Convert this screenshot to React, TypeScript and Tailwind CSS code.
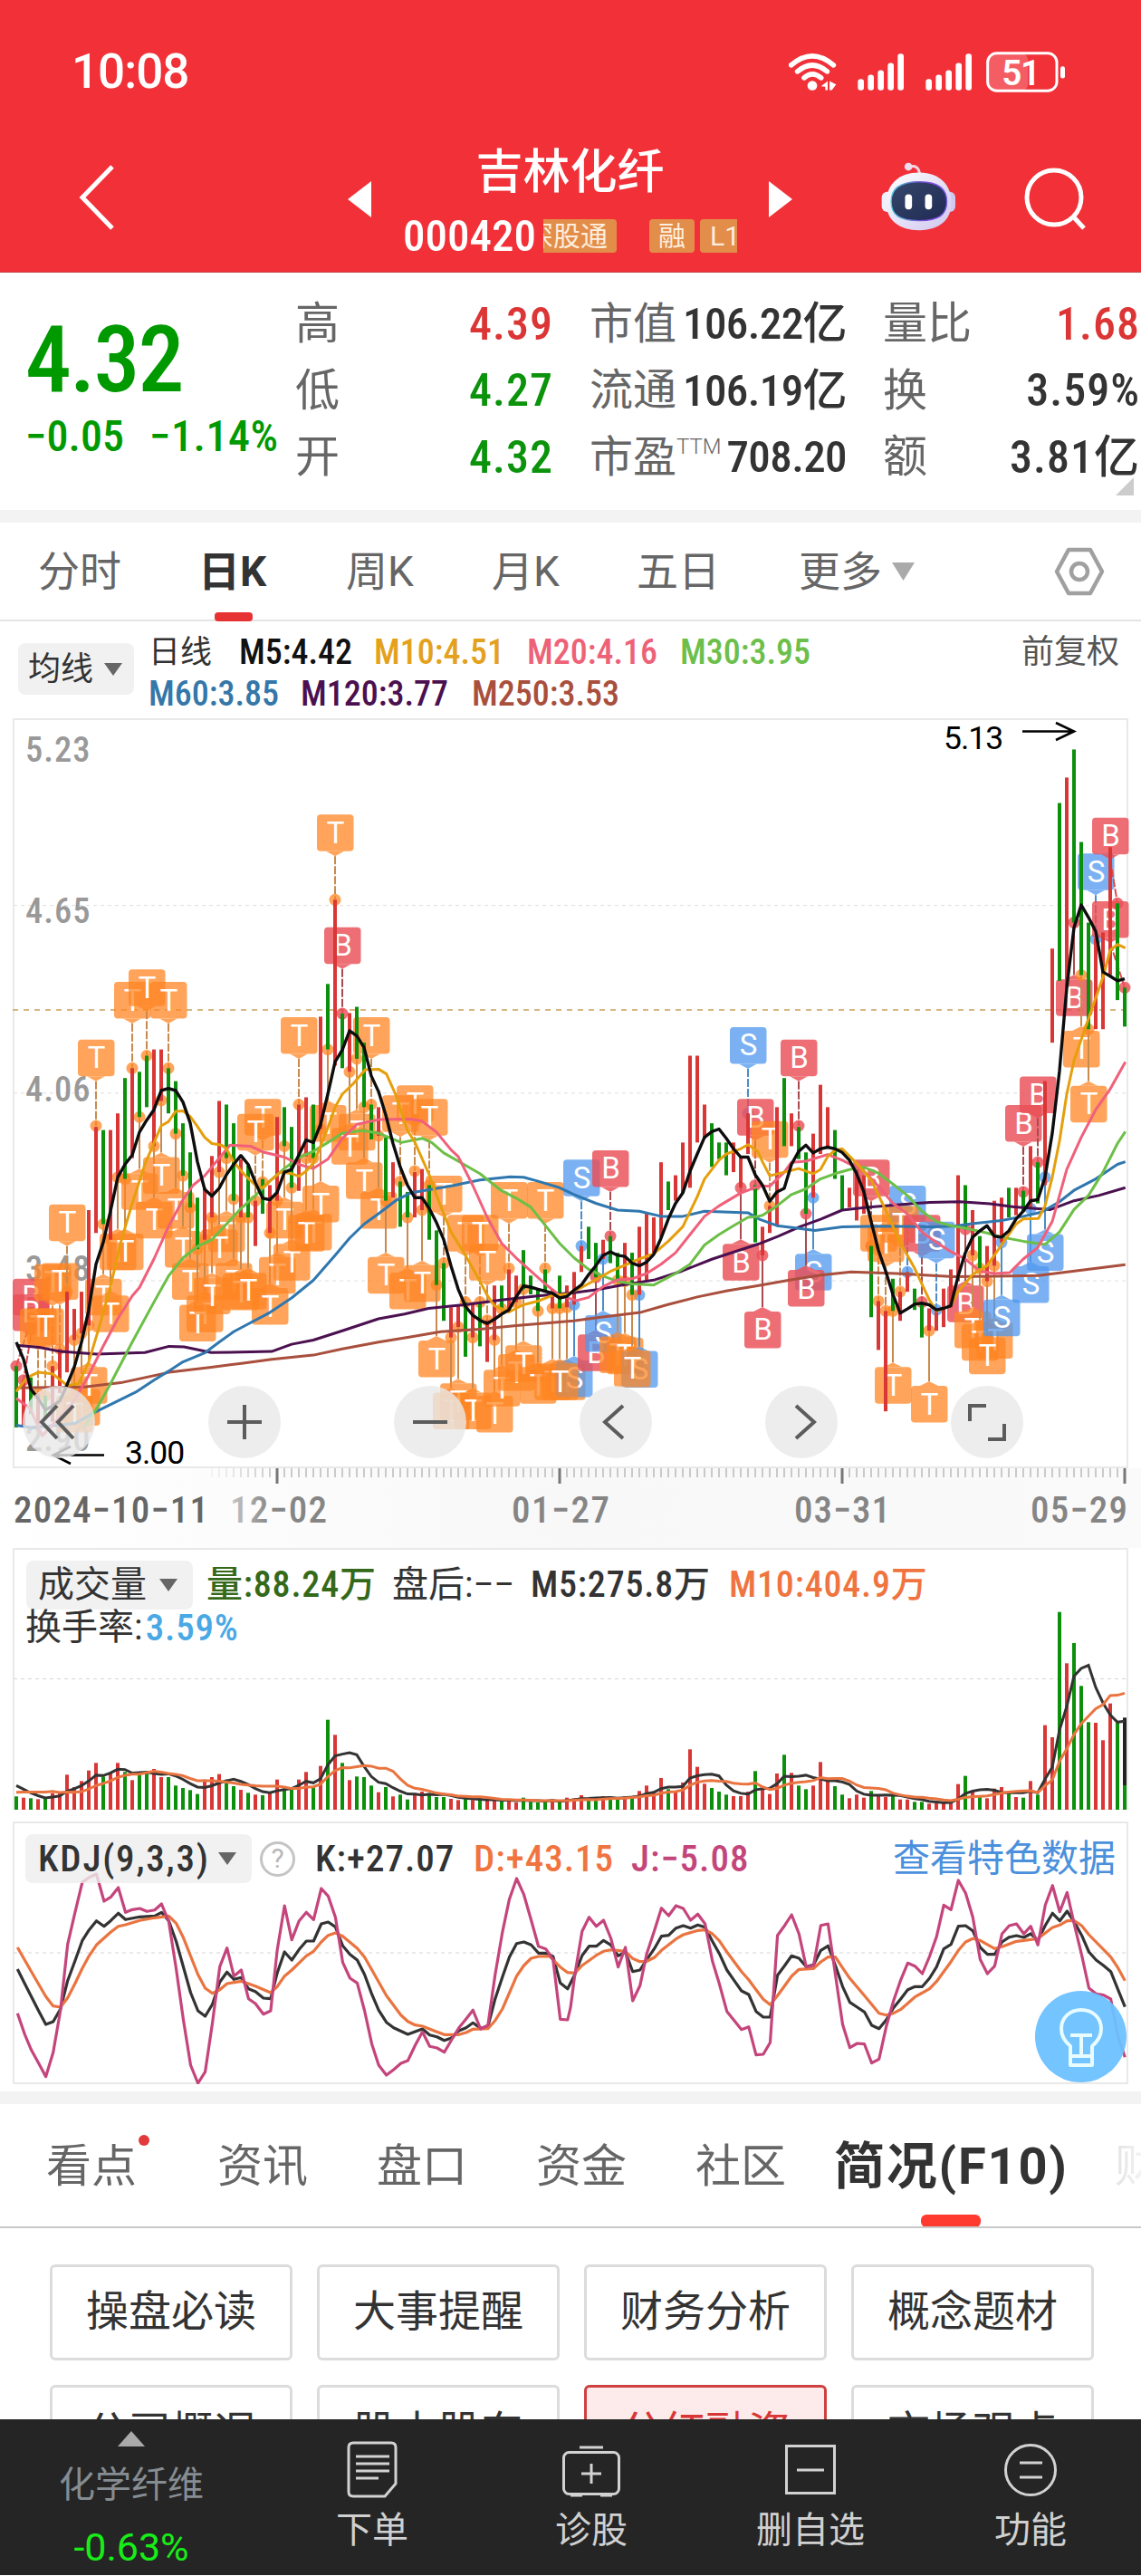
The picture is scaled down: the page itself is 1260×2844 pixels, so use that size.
import { ReactNode } from 'react'

type Pt = [number, number]

// [color, high, low] per trading day, in plot units
const CANDLES = `g1268-1386 r1295-1386 g1290-1360 r1320-1380 g1325-1370 r1268-1375 r1235-1320 r1125-1280 r1158-1218 r1125-1205
r968-1190 r808-1012 g814-995 r814-1025 r782-905 g714-908 r695-868 g702-789 g671-770 r659-845
r659-758 g695-782 g720-821 g801-902 g857-963 g944-1043 r925-1025 r864-982 r758-895 g765-868
g801-950 r870-982 g882-982 r950-1037 g908-975 r920-1012 r789-950 g770-845 g808-925 r765-931
r751-865 g765-868 r596-812 g533-659 r371-690 g590-695 r589-702 g577-677 g646-770 g765-832
r770-825 g828-950 r876-944 g913-1000 g933-982 r895-982 r889-968 g920-1025 g1007-1112 g1070-1181
r1155-1213 r1150-1193 g1145-1250 r1145-1213 g1145-1230 r1180-1260 r1113-1218 g1113-1158 r1082-1165 r1094-1145
g1045-1120 g1094-1130 g1120-1162 g1082-1125 r1120-1157 g1094-1157 r1113-1155 r1087-1150 r1037-1087 g1000-1062
g1031-1097 r1025-1062 g1018-1070 g1050-1103 r1031-1105 g1050-1131 r1000-1131 r975-1105 r982-1050 r876-1020
g913-968 r901-950 r838-935 r671-925 r671-838 r765-830 g801-885 g838-870 g838-901 r838-895
r865-925 r782-860 g920-1030 r1000-1055 r960-1012 r770-998 g714-845 r782-845 g808-870 g857-975
r821-944 r727-860 r770-850 g814-908 g901-968 r925-963 r890-988 r901-975 g1037-1174 r1143-1237
r1162-1355 g1100-1162 r1125-1181 r1087-1125 g1119-1160 g1145-1213 r1157-1200 r1160-1200 r1119-1193 r1082-1155
r901-1105 g920-1005 r968-1055 g1018-1080 r1037-1105 r950-1075 r944-1030 g925-982 r925-978 g931-970
r845-965 g876-955 r720-920 r465-646 g185-527 r136-540 g82-415 g260-516 g415-620 r445-620
r434-620 r270-516 g378-564 g540-615`
  .split(/\s+/)
  .map((s) => {
    const [hi, lo] = s.slice(1).split('-').map(Number)
    return { up: s[0] === 'r', hi, lo }
  })

// each averaged line is stored in three panes of 1260 units
const MA_LINES = [
  {
    color: '#a94f3d',
    width: 3,
    panes: [
      '54,1310 280,1308 400,1300 560,1280 700,1270 800,1263 900,1255 1038,1247 1134,1235 1254,1222',
      '100,1212 200,1202 330,1197 450,1190 640,1181 730,1174 860,1165 950,1150 1050,1135 1150,1123 1254,1113',
      '100,1102 200,1093 300,1087 450,1090 640,1096 780,1095 920,1094 1040,1085 1208,1073',
    ],
  },
  {
    color: '#4b1050',
    width: 3,
    panes: [
      '54,1228 130,1232 200,1240 320,1245 480,1242 560,1230 610,1231 700,1242 900,1240 966,1226 1038,1218 1134,1200 1254,1177',
      '80,1168 160,1157 280,1150 400,1141 520,1133 640,1127 720,1121 800,1112 910,1102 1000,1085 1100,1062 1254,1033',
      '60,1018 130,1000 200,985 270,968 350,963 450,958 560,953 660,952 760,956 840,962 960,967 1038,950 1120,940 1208,925',
    ],
  },
  {
    color: '#2f77ae',
    width: 3,
    panes: [
      '54,1382 100,1386 200,1382 250,1378 310,1358 380,1338 450,1318 510,1295 558,1278 606,1260 680,1242 726,1222 774,1202 822,1187 894,1165 966,1137 1038,1103 1110,1055 1158,1022 1206,995 1254,975',
      '50,950 100,935 170,928 240,921 330,910 430,904 475,905 520,912 594,925 642,938 714,955 786,968 858,970 930,980 1002,980 1074,970 1218,973 1254,985',
      '54,998 110,1002 180,1007 270,1000 400,999 560,1000 640,999 700,994 798,988 870,980 930,972 990,952 1038,930 1110,908 1182,880 1208,875',
    ],
  },
  {
    color: '#6cbf47',
    width: 3,
    panes: [
      '280,1385 318,1352 366,1302 438,1222 510,1145 558,1095 606,1060 654,1038 702,1025 750,995 798,965 846,940 894,912 942,888 990,867 1038,855 1086,838 1134,820 1200,815 1254,820',
      '70,838 140,830 170,838 210,858 270,878 330,898 400,930 450,945 498,962 546,997 594,1032 642,1060 690,1082 738,1095 786,1105 834,1110 906,1112 978,1090 1026,1072 1074,1035 1122,1015 1170,998 1218,982 1250,980',
      '6,978 54,960 102,938 150,927 198,908 246,898 294,890 340,885 390,897 438,918 486,940 534,970 582,990 630,998 680,1003 750,1012 798,1020 870,1028 942,1034 990,1010 1038,967 1086,940 1134,895 1182,840 1208,817',
    ],
  },
  {
    color: '#f0607a',
    width: 3,
    panes: [
      '54,1330 100,1350 140,1402 200,1365 245,1335 290,1290 340,1232 390,1177 438,1133 462,1117 510,1062 558,1000 606,948 640,920 678,902 726,868 762,843 830,845 870,856 942,866 990,880 1038,888 1086,870 1134,830 1182,803 1254,794',
      '100,793 138,797 186,818 234,852 258,865 306,920 354,982 402,1032 450,1060 498,1085 546,1110 594,1132 650,1142 690,1136 738,1115 786,1102 834,1100 882,1090 930,1072 978,1050 1026,1015 1074,980 1122,960 1194,935 1254,922',
      '30,922 78,895 102,876 150,874 222,861 270,872 342,893 390,922 438,955 486,975 534,1010 582,1030 630,1048 678,1062 726,1085 774,1090 826,1088 870,1062 918,1040 966,990 1014,890 1062,828 1110,775 1158,735 1208,683',
    ],
  },
  {
    color: '#e69f0c',
    width: 3,
    panes: [
      '54,1317 90,1290 126,1280 174,1283 222,1305 260,1302 294,1260 330,1190 366,1115 400,1030 438,955 480,880 534,806 558,798 582,778 606,777 630,788 654,807 678,828 702,840 734,843 750,850 774,875 810,900 850,922 870,925 894,912 930,895 966,898 990,903 1014,893 1038,878 1062,845 1086,810 1110,770 1134,745 1170,725 1210,698 1254,697',
      '20,706 50,745 90,815 114,837 162,900 186,940 234,1010 282,1055 330,1105 354,1132 378,1152 426,1164 474,1150 522,1143 570,1132 618,1130 666,1117 714,1102 762,1086 810,1074 858,1062 906,1052 954,1028 1002,1000 1050,942 1074,908 1122,872 1146,860 1194,850 1218,842 1250,855',
      '6,875 30,902 78,895 126,888 174,898 198,890 222,865 246,853 270,850 318,878 366,910 414,968 462,1030 510,1080 558,1140 582,1162 630,1152 654,1125 702,1092 750,1075 798,1035 846,995 870,985 920,984 942,960 966,905 990,835 1014,745 1038,680 1062,640 1086,600 1110,560 1134,520 1158,468 1182,457 1208,464',
    ],
  },
  {
    color: '#0d0d0d',
    width: 3.4,
    panes: [
      '54,1222 78,1255 102,1312 126,1330 150,1352 174,1345 198,1335 222,1304 246,1270 270,1222 294,1160 318,1072 342,1030 366,970 390,905 414,880 438,862 462,818 486,795 510,775 534,738 558,734 582,738 606,760 630,800 654,875 678,928 702,941 726,926 750,900 774,880 798,863 822,880 846,915 870,945 894,948 918,934 942,895 966,890 990,862 1014,833 1038,838 1062,803 1086,745 1110,683 1134,660 1158,623 1182,633 1206,655 1230,710 1254,740',
      '18,785 42,840 66,885 90,920 114,944 138,944 162,965 186,992 210,1025 234,1075 258,1120 282,1153 306,1170 330,1180 354,1186 378,1178 402,1168 426,1160 450,1135 474,1114 498,1116 522,1120 546,1124 570,1128 594,1137 618,1134 642,1122 666,1112 690,1092 714,1075 738,1055 762,1048 786,1055 810,1057 834,1070 858,1075 882,1068 906,1053 930,1022 954,985 978,955 1002,935 1026,893 1050,860 1074,828 1098,817 1122,812 1146,830 1170,850 1194,866 1218,866 1242,900',
      '6,920 30,951 54,933 78,926 102,880 126,855 150,843 174,858 198,850 222,847 246,850 270,857 294,872 318,898 342,933 366,990 390,1045 414,1085 438,1130 462,1166 486,1158 510,1149 534,1147 558,1150 582,1160 606,1157 630,1152 654,1095 678,1050 702,1020 726,1008 750,998 774,1018 798,1020 822,1008 846,985 870,970 894,950 918,948 942,905 966,820 990,700 1014,540 1038,425 1062,381 1086,405 1110,432 1134,510 1158,518 1182,527 1206,523',
    ],
  },
]

// letter x,boxTop,anchor[,anchorX]
const MARKERS = `B102,1100,1268,54 B102,1130,1295,78 T174,1072,1268 T198,1070,1235 T126,1157,1320 T150,1157,1325 T222,957,1125 T318,640,806
T270,1312,1205 T246,1325,1218 T294,1270,1190 T342,1100,995 T366,1132,1025 T390,1013,905 T414,1013,908
T438,529,695 T486,505,671 T558,529,695 T462,897,789 T510,952,845 T534,866,757 T582,933,821
T606,1008,902 T630,1070,963 T678,1132,1025 T654,1150,1043 T702,1098,982 T750,978,868 T726,1005,895 T774,1070,947
T798,1090,982 T822,1088,982 T870,754,914 T846,783,950 T894,1118,1012 T918,1058,950 T942,952,845 T966,1033,925
T990,597,765 T1038,975,868 T1014,977,868 T1062,921,812 T1086,766,659 T1110,207,371 B1134,424,590
T1182,783,677 T1158,810,702 T1206,876,770 T1230,597,765 T1254,933,825
T1326,747,913 T1374,728,893 T1422,754,920 T1278,1058,950 T1350,1088,982 T1398,1074,968 T1446,1219,1112
T1470,902,1070 T1542,977,1145 T1590,977,1145 T1614,1033,1180 T1494,1319,1213 T1518,1301,1193 T1566,1319,1213 T1638,1325,1218
T1662,1275,1158 T1686,914,1080 T1710,1245,1145 T1734,1228,1120 T1782,1270,1162 T1806,914,1080
T1830,1263,1157 T1878,1263,1155 S1902,1257,1150 T1854,1263,1157
S1926,871,1037 B2022,853,1018 B1974,1207,1097 S1998,1170,1062 T2046,1211,1103 T2070,1213,1105 S2118,1239,1131 T2094,1238,1131
S2478,616,782 B2454,1033,925 B2502,754,920 B2526,1163,1055 T2550,797,960
B2646,640,806 S2694,1052,944 B2670,1083,975
B2886,871,1037 T2910,977,1143 T2934,997,1162 S3006,921,1087 T2982,960,1125 T2958,1270,1162 B3054,977,1145 S3102,990,1160 T3078,1306,1200
B3198,1113,1005 T3222,1163,1055 T3246,1187,1080 T3294,1183,1075 T3270,1213,1105 S3318,1140,1030
B3390,766,933 B3438,711,876 S3414,1076,965 S3462,1014,905
B3558,524,415 T3582,623,516 T3606,729,620 S3630,282,447 B3678,213,378,3702 B3678,374,540,3726`
  .split(/\s+/)
  .map((s) => {
    const [x, top, anchor, ax] = s.slice(1).split(',').map(Number)
    return { kind: s[0] as 'T' | 'B' | 'S', x, top, anchor, ax: ax || x }
  })

const MARKER_STYLE = {
  T: { fill: '#ff8522', opacity: 0.74, line: '#c98a4e' },
  B: { fill: '#ea4f56', opacity: 0.82, line: '#a84a4e' },
  S: { fill: '#4f98ee', opacity: 0.75, line: '#4b8cc9' },
}

const VOLUMES = [
  44, 40, 38, 35, 40, 55, 60, 116, 75, 95, 130, 155, 110, 120, 155, 125, 98, 115, 128, 135, 108, 108, 80, 72, 65, 52,
  100, 108, 118, 100, 78, 66, 56, 50, 48, 60, 100, 75, 70, 100, 125, 75, 145, 298, 248, 155, 98, 110, 108, 80, 58, 75,
  44, 50, 34, 55, 60, 55, 42, 42, 36, 32, 38, 32, 34, 30, 32, 28, 34, 24, 40, 26, 24, 30, 34, 24, 40, 38, 48, 36, 32,
  45, 40, 38, 44, 42, 62, 80, 60, 105, 68, 62, 90, 200, 142, 86, 72, 60, 50, 45, 45, 60, 128, 72, 52, 120, 182, 122,
  80, 68, 80, 158, 95, 78, 50, 38, 50, 40, 62, 50, 42, 48, 34, 34, 26, 26, 20, 22, 22, 28, 85, 112, 60, 44, 38, 70,
  75, 55, 42, 40, 95, 50, 280, 240, 655, 485, 552, 410, 290, 288, 230, 352, 290, 305,
]
const VOLUMES_BEFORE = [36, 36, 36, 36, 36, 100, 100, 80, 76]

const KDJ_LINES = [
  {
    color: '#333333',
    panes: [
      '48,522 68,570 106,660 126,705 146,696 166,655 186,560 206,495 226,428 245,392 265,362 286,380 304,362 325,337 345,358 384,349 425,346 444,334 464,362 484,430 524,600 544,660 564,678 584,638 604,565 624,532 643,556 663,550 683,587 702,596 724,618 744,620 762,535 782,465 802,492 822,457 842,429 862,429 883,372 902,366 922,382 942,445 962,473 982,492 1002,540 1022,605 1041,658 1062,698 1082,716 1121,738 1161,720 1181,740 1201,746 1221,758 1241,750 1261,726 1281,716 1300,700 1321,718 1341,712 1361,620 1381,548 1400,482 1420,437 1440,432 1460,442 1480,469 1500,469 1520,480 1540,568 1560,587',
      '12,540 32,477 51,446 71,446 91,427 111,442 131,478 151,465 171,530 191,525 210,490 230,455 250,413 270,410 290,386 310,378 330,386 350,376 370,383 390,430 409,470 430,525 450,560 470,594 490,606 510,662 530,681 549,681 569,542 589,510 608,478 628,486 648,514 668,508 688,460 708,445 728,510 748,580 768,632 788,648 808,664 828,708 848,719 868,690 888,650 907,622 927,590 947,580 967,580 987,552 1006,515 1026,455 1046,440 1066,380 1086,378 1106,395 1126,450 1146,473 1166,473 1186,432 1206,416 1226,411 1246,417 1265,405 1285,426 1305,377 1325,337 1345,362 1365,330 1385,366 1405,410 1425,465 1445,492 1465,510 1485,530 1505,590 1524,647',
    ],
  },
  {
    color: '#ea7440',
    panes: [
      '48,450 86,530 126,613 146,644 166,648 186,617 206,570 226,520 245,478 265,442 304,400 325,380 345,375 384,361 425,352 464,346 484,370 504,418 544,540 564,585 584,602 604,590 624,570 663,562 702,578 744,600 762,580 782,545 802,525 842,478 862,463 883,432 902,410 922,402 942,413 982,453 1002,482 1022,524 1062,610 1102,674 1121,695 1141,707 1161,711 1201,730 1221,739 1261,739 1281,732 1300,721 1341,719 1361,692 1381,654 1420,545 1440,510 1460,486 1480,480 1510,479 1540,515 1560,533',
      '12,535 32,510 71,476 91,463 111,458 151,463 171,487 191,497 210,496 230,484 250,460 290,422 310,408 350,394 370,392 390,405 409,428 430,465 470,530 490,557 510,590 530,622 549,640 569,610 608,545 628,523 668,520 688,498 708,482 728,482 748,518 768,553 808,610 848,668 868,674 888,668 907,656 947,614 987,587 1006,563 1046,497 1066,460 1086,432 1106,421 1126,427 1166,454 1186,448 1226,430 1285,421 1325,384 1345,376 1365,362 1385,362 1405,378 1425,408 1465,457 1485,482 1505,518 1524,560',
    ],
  },
  {
    color: '#c4457c',
    panes: [
      '48,668 68,738 86,790 106,833 126,878 146,798 166,660 186,440 206,335 226,235 245,218 265,207 286,297 304,284 325,252 345,334 364,325 384,321 404,331 425,326 444,306 464,365 484,520 504,690 524,840 544,900 564,862 584,700 604,514 624,452 643,545 663,525 683,620 702,636 724,671 744,660 762,460 782,312 802,425 822,362 842,334 862,358 883,255 902,280 922,350 942,500 962,552 982,568 1002,660 1022,770 1041,840 1062,873 1082,855 1102,834 1121,825 1141,775 1161,730 1181,778 1201,783 1221,797 1241,757 1261,717 1281,687 1300,658 1321,720 1341,708 1361,540 1381,400 1400,290 1420,222 1440,275 1460,360 1480,446 1500,455 1520,490 1540,688 1560,690',
      '0,650 12,540 32,397 51,350 71,380 91,360 111,420 131,515 151,450 171,627 191,577 210,470 230,397 250,320 270,345 290,312 310,321 330,360 350,340 370,372 390,495 409,570 430,662 450,692 470,722 490,713 510,806 530,804 549,765 569,410 589,377 608,342 628,405 648,515 668,510 688,377 708,372 728,540 748,705 768,782 788,768 808,770 828,833 848,820 868,712 888,627 907,560 927,502 947,512 967,537 987,480 1006,415 1026,310 1046,325 1066,228 1086,270 1106,350 1126,490 1146,537 1166,512 1186,405 1206,378 1226,372 1246,405 1265,380 1285,442 1305,310 1325,245 1345,332 1365,268 1385,375 1405,475 1425,585 1445,604 1465,608 1485,621 1505,745 1524,814',
    ],
  },
]

const parsePanes = (panes: string[], paneWidth: number): Pt[] =>
  panes.flatMap((pane, n) =>
    pane.split(' ').map((p) => {
      const [x, y] = p.split(',').map(Number)
      return [x + n * paneWidth, y] as Pt
    }),
  )

const toPath = (pts: Pt[]) => pts.map(([x, y], i) => `${i ? 'L' : 'M'}${x.toFixed(1)} ${y.toFixed(1)}`).join('')

const px = (x: number) => x / 3
const py = (y: number) => (y - 22) * 0.574
const dayX = (i: number) => 18 + i * 8

const volumeAverage = (days: number): Pt[] => {
  const all = [...VOLUMES_BEFORE, ...VOLUMES]
  return VOLUMES.map((_, i) => {
    const end = i + VOLUMES_BEFORE.length + 1
    const sum = all.slice(end - days, end).reduce((a, b) => a + b, 0)
    return [dayX(i), 289 - sum / days / 3] as Pt
  })
}

function Caret({ className }: { className: string }) {
  return (
    <svg viewBox="0 0 20 14" className={className} preserveAspectRatio="none">
      <path d="M0 0H20L10 14Z" fill="currentColor" />
    </svg>
  )
}

function StatusBar() {
  return (
    <div className="flex h-[158px] items-center justify-between pl-[79px] pr-[84px]">
      <span className="text-[53px] font-medium leading-none tracking-[-1px]">10:08</span>
      <svg viewBox="93 44 915 140" className="h-[47px] w-[305px]">
        <g fill="none" stroke="#fff" strokeWidth="17" strokeLinecap="round">
          <path d="M101 91Q171 31 241 91" />
          <path d="M122 112Q171 71 220 112" />
          <path d="M144 133Q171 109 200 133" />
        </g>
        <circle cx="171" cy="159" r="16" fill="#fff" />
        <path d="M200 161L222 144V174H214V163ZM228 144L250 155L236 174H228Z" fill="#fff" />
        {[0, 225].map((dx) => (
          <g key={dx} fill="#fff">
            {[137, 123, 108, 84, 53].map((top, i) => (
              <rect key={i} x={322 + dx + i * 33} y={top} width="20" height={175 - top} rx="9" />
            ))}
          </g>
        ))}
        <rect x="753" y="53" width="132" height="122" rx="20" fill="#fff" opacity=".22" />
        <rect x="752" y="52" width="229" height="124" rx="30" fill="none" stroke="#fff" strokeWidth="9" />
        <rect x="993" y="95" width="15" height="40" rx="7" fill="#fff" />
        <text x="861" y="157" textAnchor="middle" fontSize="116" fontWeight="600" letterSpacing="-4" fill="#fff">
          51
        </text>
      </svg>
    </div>
  )
}

function Robot() {
  return (
    <svg viewBox="400 418 248 230" className="h-[77px] w-[83px]">
      <defs>
        <linearGradient id="shell" x1="0" y1="0" x2="1" y2="1">
          <stop offset="0" stopColor="#ffffff" />
          <stop offset="1" stopColor="#cfc6ee" />
        </linearGradient>
        <linearGradient id="visor" x1="0" y1="0" x2="1" y2="1">
          <stop offset="0" stopColor="#36466b" />
          <stop offset="1" stopColor="#1f2a52" />
        </linearGradient>
        <linearGradient id="rim" x1="0" y1="0" x2="1" y2="0">
          <stop offset="0" stopColor="#4fd0dc" />
          <stop offset=".6" stopColor="#7b45d8" />
          <stop offset="1" stopColor="#7d5bf0" />
        </linearGradient>
      </defs>
      <path d="M492 434Q524 424 527 458" fill="none" stroke="#f3d4e4" strokeWidth="9" />
      <circle cx="490" cy="433" r="13" fill="#efdcee" />
      <rect x="402" y="516" width="40" height="66" rx="18" fill="#f0f0fb" />
      <rect x="605" y="516" width="40" height="66" rx="18" fill="#cfc8f2" />
      <path
        d="M525 452C590 452 632 490 632 552C632 610 590 643 525 643C460 643 417 610 417 552C417 490 460 452 525 452Z"
        fill="url(#shell)"
      />
      <path
        d="M525 483C590 483 617 508 617 548C617 592 590 611 525 611C460 611 433 592 433 548C433 508 460 483 525 483Z"
        fill="url(#visor)"
        stroke="url(#rim)"
        strokeWidth="4"
      />
      <rect x="479" y="524" width="23" height="50" rx="11" fill="#fff" />
      <rect x="545" y="524" width="23" height="50" rx="11" fill="#fff" />
    </svg>
  )
}

function Header() {
  return (
    <header className="h-[301px] border-b border-[#c04448] bg-[#f13038] text-white">
      <StatusBar />
      <div className="flex h-[119px] items-center">
        <svg viewBox="0 0 40 74" className="ml-[87px] h-[74px] w-[40px]">
          <path d="M37 3L4 37L37 71" fill="none" stroke="#fff" strokeWidth="5" />
        </svg>
        <svg viewBox="0 0 26 40" className="ml-[257px] mt-[4px] h-[40px] w-[26px]">
          <path d="M26 0V40L0 20Z" fill="#fff" />
        </svg>
        <div className="flex w-[439px] flex-col items-center pt-[5px]">
          <h1 className="text-[52px] font-medium leading-[60px]">吉林化纤</h1>
          <div className="mt-[21px] flex w-[369px] items-center">
            <span className="w-[155px] text-[49px] font-medium font-stretch-[75%] leading-[38px]">000420</span>
            <div className="flex h-[37px] w-[214px] items-center overflow-hidden whitespace-nowrap text-[30px] leading-none text-[#fdeedd]">
              <span className="flex h-full w-[81px] shrink-0 items-center justify-end rounded-r bg-[#e38d4a] pr-[10px]">
                深股通
              </span>
              <span className="ml-[36px] flex h-full w-[50px] shrink-0 items-center justify-center rounded bg-[#e38d4a]">
                融
              </span>
              <span className="ml-[6px] flex h-full w-[60px] shrink-0 items-center rounded bg-[#e38d4a] pl-[11px]">L1</span>
            </div>
          </div>
        </div>
        <svg viewBox="0 0 26 40" className="mt-[4px] h-[40px] w-[26px]">
          <path d="M0 0V40L26 20Z" fill="#fff" />
        </svg>
        <div className="ml-[98px]">
          <Robot />
        </div>
        <svg viewBox="0 0 70 70" className="ml-[74px] mt-[2px] h-[70px] w-[70px]">
          <g fill="none" stroke="#fff" strokeWidth="5">
            <circle cx="34" cy="34" r="30" />
            <path d="M55 55L67 68" />
          </g>
        </svg>
      </div>
    </header>
  )
}

const QUOTE_ROWS = [
  { a: '高', av: '4.39', ac: 'text-[#dc3535]', b: '市值', bv: '106.22亿', c: '量比', cv: '1.68', cc: 'text-[#dc3535]' },
  { a: '低', av: '4.27', ac: 'text-[#0b930b]', b: '流通', bv: '106.19亿', c: '换', cv: '3.59%', cc: 'text-[#333]' },
  { a: '开', av: '4.32', ac: 'text-[#0b930b]', b: '市盈', bv: '708.20', c: '额', cv: '3.81亿', cc: 'text-[#333]' },
]

function Quote() {
  return (
    <section className="relative flex h-[262px]">
      <div className="w-[326px] pl-[28px] font-stretch-[75%] text-[#009900]">
        <div className="mt-[44px] text-[102px] font-medium leading-[104px] tracking-[-2px]">4.32</div>
        <div className="mt-[5px] flex text-[48px] font-medium leading-[56px]">
          <span className="w-[137px]">−0.05</span>
          <span className="whitespace-nowrap tracking-[0.5px]">−1.14%</span>
        </div>
      </div>
      <div className="mt-[20px] flex flex-col">
        {QUOTE_ROWS.map((r) => (
          <div key={r.a} className="flex h-[73.5px] items-center whitespace-nowrap text-[49px] leading-none text-[#666]">
            <span className="w-[134px]">{r.a}</span>
            <span className={`w-[151px] text-right text-[50px] font-medium font-stretch-[75%] tracking-[1px] ${r.ac}`}>
              {r.av}
            </span>
            <span className="ml-[40px] flex w-[108px] items-center text-[48px]">
              {r.b}
              {r.b === '市盈' && <sup className="-top-3 text-[24px] font-light leading-none">TTM</sup>}
            </span>
            <span className="flex w-[176px] justify-end font-medium font-stretch-[75%] tracking-[-0.6px] text-[#333]">
              {r.bv}
            </span>
            <span className="ml-[40px] w-[108px]">{r.c}</span>
            <span className={`w-[176px] text-right text-[50px] font-medium font-stretch-[75%] tracking-[1px] ${r.cc}`}>
              {r.cv}
            </span>
          </div>
        ))}
      </div>
      <svg viewBox="0 0 20 20" className="absolute bottom-[16px] right-[8px] h-5 w-5">
        <path d="M20 0V20H0Z" fill="#ccc" />
      </svg>
    </section>
  )
}

function PeriodTabs() {
  return (
    <nav className="flex h-[109px] items-center border-b-2 border-[#e4e4e4] text-[46px] leading-none text-[#666]">
      <span className="ml-[42px] w-[177px]">分时</span>
      <span className="relative w-[163px] font-bold text-[#333]">
        日K
        <i className="absolute -bottom-[32px] left-[18px] h-[10px] w-[42px] rounded bg-[#e63232]" />
      </span>
      <span className="w-[161px]">周K</span>
      <span className="w-[160px]">月K</span>
      <span className="w-[179px]">五日</span>
      <span className="w-[103px]">更多</span>
      <Caret className="h-[20px] w-[25px] text-[#aaa]" />
      <svg viewBox="0 0 56 54" className="ml-[154px] h-[54px] w-[56px]">
        <g fill="none" stroke="#a0a0a0" strokeWidth="4.5" strokeLinejoin="round">
          <path d="M16 3H40L53 27L40 51H16L3 27Z" />
          <circle cx="28" cy="27" r="9" />
        </g>
      </svg>
    </nav>
  )
}

function AverageLegend() {
  return (
    <div className="flex h-[107px] whitespace-nowrap text-[36px] leading-none text-[#333]">
      <div className="ml-[20px] mt-[24px] flex h-[57px] w-[128px] items-center rounded-lg bg-[#f1f1f1] pl-[11px]">
        均线
        <Caret className="ml-[12px] h-[14px] w-[20px] text-[#666]" />
      </div>
      <div className="ml-[16px] mt-[11px] text-[38px] font-medium font-stretch-[75%]">
        <div className="flex h-[46px] items-center">
          <span className="w-[100px] text-[35px] font-normal">日线</span>
          <span className="w-[149px] text-[#111]">M5:4.42</span>
          <span className="w-[169px] text-[#e3a11c]">M10:4.51</span>
          <span className="w-[169px] text-[#ee6278]">M20:4.16</span>
          <span className="w-[377px] text-[#6cbf4a]">M30:3.95</span>
          <span className="text-[36px] font-normal text-[#555]">前复权</span>
        </div>
        <div className="flex h-[46px] items-center">
          <span className="w-[168px] text-[#3577a8]">M60:3.85</span>
          <span className="w-[189px] text-[#4b1050]">M120:3.77</span>
          <span className="text-[#a94f3d]">M250:3.53</span>
        </div>
      </div>
    </div>
  )
}

function Marker({ m }: { m: (typeof MARKERS)[number] }) {
  const s = MARKER_STYLE[m.kind]
  const x = px(m.x)
  const top = py(m.top)
  const a = py(m.anchor)
  const ax = px(m.ax)
  const above = m.anchor > m.top
  const edge = above ? top + 46 : top - 5
  return (
    <g>
      <line
        x1={x}
        y1={edge}
        x2={ax}
        y2={a}
        stroke={m.ax !== m.x ? '#dc4a50' : s.line}
        strokeWidth="2"
        strokeDasharray={above ? '9 2' : undefined}
      />
      <circle cx={ax} cy={a} r="6.5" fill={s.fill} opacity={s.opacity} />
      <g fill={s.fill} opacity={s.opacity}>
        <rect x={x - 20} y={top} width="40.5" height="40.5" rx="4" />
        <path
          d={above ? `M${x - 10} ${top + 40.5}L${x} ${top + 46}L${x + 10} ${top + 40.5}Z` : `M${x - 10} ${top}L${x} ${top - 5}L${x + 10} ${top}Z`}
        />
      </g>
      <text x={x + 0.5} y={top + 31.5} textAnchor="middle" fontSize="33" fill="#fff">
        {m.kind}
      </text>
    </g>
  )
}

const CHART_BUTTONS = [
  'M-2 -18L-19 0L-2 18M16 -18L-1 0L16 18',
  'M-19 0H19M0 -19V19',
  'M-19 0H19',
  'M8 -18L-12 0L8 18',
  'M-6 -18L14 0L-6 18',
  'M-19 -1V-18H-1M1 19H19V2',
]

function PriceChart() {
  return (
    <div className="relative h-[828px]">
      <svg viewBox="0 0 1260 828" className="h-full w-full overflow-visible">
        <rect x="15" y="1" width="1230" height="826" fill="none" stroke="#e9e9e9" strokeWidth="2" />
        {[382, 743, 1104].map((y) => (
          <line key={y} x1="15" x2="1245" y1={py(y)} y2={py(y)} stroke="#dedede" strokeWidth="1" strokeDasharray="4 4" />
        ))}
        <g fontSize="38.500" fontWeight="500" fill="#999" letterSpacing="1" className="font-stretch-[75%]">
          <text x="28" y="48">5.23</text>
          <text x="28" y="226">4.65</text>
          <text x="28" y="423">4.06</text>
          <text x="28" y="621">3.48</text>
          <text x="28" y="809">2.90</text>
        </g>
        <line x1="14" x2="1245" y1={py(583)} y2={py(583)} stroke="#c9a05a" strokeWidth="1.6" strokeDasharray="6 6" />
        {MARKERS.map((m, i) => (
          <Marker key={i} m={m} />
        ))}
        {CANDLES.map((c, i) => (
          <rect
            key={i}
            x={dayX(i) - 2}
            y={py(c.hi)}
            width="4"
            height={py(c.lo) - py(c.hi)}
            fill={c.up ? '#d93636' : '#0c900c'}
          />
        ))}
        {MA_LINES.map((l) => (
          <path
            key={l.color}
            d={toPath(parsePanes(l.panes, 1260).map(([x, y]) => [px(x), py(y)] as Pt))}
            fill="none"
            stroke={l.color}
            strokeWidth={l.width}
            strokeLinejoin="round"
          />
        ))}
        <g fontSize="35.500" fill="#000" letterSpacing="-1">
          <text x="1042" y="34">5.13</text>
          <text x="138" y="823">3.00</text>
        </g>
        <g fill="none" stroke="#000" strokeWidth="2.6">
          <path d="M1129 14.500H1186M1166 5L1186 14.500L1166 24" />
          <path d="M115 813.500H59M78 804L59 813.500L78 823" />
        </g>
      </svg>
      <div className="absolute left-[25px] top-[737px] flex gap-[125px]">
        {CHART_BUTTONS.map((d) => (
          <button key={d} className="h-[80px] w-[80px] rounded-full bg-[#e8e8e8]/80">
            <svg viewBox="-40 -40 80 80">
              <path d={d} fill="none" stroke="#5c5c5c" strokeWidth="4" />
            </svg>
          </button>
        ))}
      </div>
    </div>
  )
}

function DateAxis() {
  return (
    <div className="h-[88px] bg-gradient-to-r from-white via-[#f8f8f8] to-[#fafafa]">
      <svg viewBox="0 0 1260 88" className="h-full w-full">
        <defs>
          <linearGradient id="fade" x1="256" x2="300" gradientUnits="userSpaceOnUse">
            <stop offset="0" stopColor="#c4c4c4" />
            <stop offset="1" stopColor="#858585" />
          </linearGradient>
        </defs>
        {Array.from({ length: 127 }, (_, i) => {
          const n = i + 27
          const major = (n - 36) % 39 === 0
          return (
            <rect
              key={n}
              x={dayX(n) - (major ? 1.5 : 0.5)}
              y="0"
              width={major ? 3 : 1}
              height={major ? 17 : 10}
              fill={major ? '#777' : '#999'}
              opacity={n < 36 ? (n - 25) / 11 : 1}
            />
          )
        })}
        <g fontSize="41" fontWeight="500" fill="#858585" className="font-stretch-[75%]">
          <text x="15" y="60" fill="#666" textLength="215">2024−10−11</text>
          <text x="254" y="60" fill="url(#fade)" textLength="107">12−02</text>
          <text x="565" y="60" textLength="108">01−27</text>
          <text x="877" y="60" textLength="106">03−31</text>
          <text x="1138" y="60" textLength="107">05−29</text>
        </g>
      </svg>
    </div>
  )
}

function VolumeChart() {
  return (
    <div className="relative h-[289px] whitespace-nowrap text-[40px] leading-none text-[#333]">
      <svg viewBox="0 0 1260 289" className="absolute inset-0">
        <rect x="15" y="1" width="1230" height="288" fill="none" stroke="#e9e9e9" strokeWidth="2" />
        <line x1="15" x2="1245" y1="144.500" y2="144.500" stroke="#d5d5d5" strokeDasharray="4 4" />
        {VOLUMES.map((v, i) => (
          <rect
            key={i}
            x={dayX(i) - 2}
            y={289 - v / 3}
            width="4"
            height={v / 3}
            fill={i === 153 ? '#222' : CANDLES[i].up ? '#d93636' : '#0c900c'}
          />
        ))}
        <rect x="1240" y="262" width="4" height="27" fill="#0c900c" />
        <path d={toPath(volumeAverage(5))} fill="none" stroke="#333" strokeWidth="3" />
        <path d={toPath(volumeAverage(10))} fill="none" stroke="#ea7440" strokeWidth="3" />
      </svg>
      <div className="relative top-[14px] flex h-[54px] items-center pl-[29px]">
        <div className="flex h-full w-[184px] items-center rounded-lg bg-[#f1f1f1] pl-[13px]">
          成交量
          <Caret className="ml-[14px] h-[14px] w-[20px] text-[#666]" />
        </div>
        <span className="ml-[15px] w-[205px] font-medium font-stretch-[75%] tracking-[0.8px] text-[#35691a]">
          量:88.24万
        </span>
        <span className="w-[153px]">盘后:−−</span>
        <span className="w-[219px] font-medium font-stretch-[75%] tracking-[0.8px]">M5:275.8万</span>
        <span className="font-medium font-stretch-[75%] tracking-[0.8px] text-[#f0743f]">M10:404.9万</span>
      </div>
      <div className="relative top-[14px] flex h-[40px] items-center pl-[28px]">
        换手率:
        <span className="ml-[3px] text-[41px] font-medium font-stretch-[75%] tracking-[0.8px] text-[#4aa8e4]">3.59%</span>
      </div>
    </div>
  )
}

function KdjChart() {
  return (
    <div className="relative mt-[13px] h-[290px] whitespace-nowrap text-[41px] font-medium leading-none">
      <svg viewBox="0 0 1260 290" className="absolute inset-0">
        <rect x="15" y="1" width="1230" height="288" fill="none" stroke="#e9e9e9" strokeWidth="2" />
        <line x1="15" x2="1245" y1="145" y2="145" stroke="#d5d5d5" strokeDasharray="4 4" />
        {KDJ_LINES.map((l) => (
          <path
            key={l.color}
            d={toPath(parsePanes(l.panes, 1568).map(([x, y]) => [x / 2.489, y / 3 - 11] as Pt))}
            fill="none"
            stroke={l.color}
            strokeWidth="3.2"
            strokeLinejoin="round"
          />
        ))}
      </svg>
      <div className="relative top-[14px] flex h-[54px] items-center pl-[28px]">
        <div className="flex h-full w-[250px] items-center rounded-lg bg-[#eeeeee]/80 text-[#333]">
          <span className="ml-[14px] w-[199px] font-stretch-[75%] tracking-[1.8px]">KDJ(9,3,3)</span>
          <Caret className="h-[14px] w-[20px] text-[#666]" />
        </div>
        <span className="ml-[9px] flex h-[39px] w-[39px] items-center justify-center rounded-full border-[3px] border-[#c4c4c4] text-[30px] font-normal text-[#b8b8b8]">
          ?
        </span>
        <span className="ml-[22px] w-[175px] font-stretch-[75%] tracking-[1px] text-[#333]">K:+27.07</span>
        <span className="w-[174px] font-stretch-[75%] tracking-[1px] text-[#f0743f]">D:+43.15</span>
        <span className="w-[289px] font-stretch-[75%] tracking-[1px] text-[#c4457c]">J:−5.08</span>
        <span className="font-normal text-[#4a90dd]">查看特色数据</span>
      </div>
      <div className="absolute right-[16px] top-[187px] flex h-[101px] w-[101px] items-center justify-center rounded-full bg-[#6bc1ff]/95">
        <svg viewBox="0 0 50 66" className="h-[66px] w-[50px]" fill="none" stroke="#e8fbff" strokeWidth="4">
          <path d="M13 64V43C7 38 3 32 3 24C3 11 13 3 25 3S47 11 47 24C47 32 43 38 37 43V64Z" strokeLinejoin="round" />
          <path d="M13 31H37M25 31V54M13 54H37" />
        </svg>
      </div>
    </div>
  )
}

function InfoTabs() {
  return (
    <nav className="flex h-[137px] items-center overflow-hidden whitespace-nowrap border-b-2 border-[#c9c9c9] pt-[3px] text-[50px] leading-none text-[#666]">
      <span className="relative ml-[51px] w-[189px] shrink-0">
        看点
        <i className="absolute -top-[10px] left-[102px] h-3 w-3 rounded-full bg-[#e23a3a]" />
      </span>
      <span className="w-[176px] shrink-0">资讯</span>
      <span className="w-[176px] shrink-0">盘口</span>
      <span className="w-[176px] shrink-0">资金</span>
      <span className="w-[153px] shrink-0">社区</span>
      <span className="relative w-[310px] shrink-0 text-[56px] font-bold tracking-[1.8px] text-[#333]">
        简况(F10)
        <i className="absolute -bottom-[39px] left-[96px] h-[14px] w-[66px] rounded-md bg-[#ff3b30]" />
      </span>
      <span className="shrink-0 bg-gradient-to-r from-[#e2e2e2] to-white bg-clip-text text-transparent">财</span>
    </nav>
  )
}

const SECTIONS = ['操盘必读', '大事提醒', '财务分析', '概念题材', '公司概况', '股本股东', '分红融资', '市场观点']

function SectionGrid() {
  return (
    <div className="h-[211px] overflow-hidden">
      <div className="grid grid-cols-4 gap-x-[27px] gap-y-[27px] pl-[55px] pr-[52px] pt-[40px]">
        {SECTIONS.map((s) => (
          <div
            key={s}
            className={`flex h-[106px] items-center justify-center rounded-md border-[3px] pb-[3px] text-[47px] leading-none ${
              s === '分红融资' ? 'border-[#cf4040] bg-[#fdeaea] text-[#d93636]' : 'border-[#dcdcdc] text-[#333]'
            }`}
          >
            {s}
          </div>
        ))}
      </div>
    </div>
  )
}

function DockItem({ label, className, children }: { label: string; className: string; children: ReactNode }) {
  return (
    <div className={`flex flex-col items-center pt-[22px] ${className}`}>
      <svg viewBox="0 0 66 66" className="h-[66px] w-[66px]" fill="none" stroke="#d2d2d2" strokeWidth="3">
        {children}
      </svg>
      <span className="mt-[15px]">{label}</span>
    </div>
  )
}

function Dock() {
  return (
    <footer className="flex h-[172px] bg-[#252525] text-[40px] leading-none text-[#d0d0d0]">
      <div className="flex w-[290px] flex-col items-center pt-[13px]">
        <svg viewBox="0 0 30 17" className="h-[17px] w-[30px]">
          <path d="M15 0L30 17H0Z" fill="#aaa" />
        </svg>
        <span className="mt-[23px] text-[#868d92]">化学纤维</span>
        <span className="mt-[27px] text-[43px] text-[#17ee17]">-0.63%</span>
      </div>
      <DockItem label="下单" className="w-[242px]">
        <path d="M12 4H54Q59 4 59 9V49L47 63H12Q7 63 7 58V9Q7 4 12 4ZM15 19H52M15 27H52M15 35H52M15 43H40" />
      </DockItem>
      <DockItem label="诊股" className="w-[242px]">
        <rect x="2.500" y="14.500" width="61" height="46" rx="6" />
        <path d="M20 9H46M10 62H23M43 62H56M33 27V49M22 38H44" />
      </DockItem>
      <DockItem label="删自选" className="w-[242px]">
        <rect x="6.500" y="7.500" width="53" height="52" />
        <path d="M18 34H48" />
      </DockItem>
      <DockItem label="功能" className="w-[244px]">
        <circle cx="33" cy="34" r="27.500" />
        <path d="M21 26H46M21 42H46" />
      </DockItem>
    </footer>
  )
}

export default function App() {
  return (
    <div className="h-[2844px] w-[1260px] overflow-hidden bg-white font-['Roboto','Noto_Sans_CJK_SC',sans-serif]">
      <Header />
      <Quote />
      <div className="h-[14px] bg-[#f3f3f3]" />
      <PeriodTabs />
      <AverageLegend />
      <PriceChart />
      <DateAxis />
      <VolumeChart />
      <KdjChart />
      <div className="mt-[8px] h-[14px] bg-[#f3f3f3]" />
      <InfoTabs />
      <SectionGrid />
      <Dock />
    </div>
  )
}
